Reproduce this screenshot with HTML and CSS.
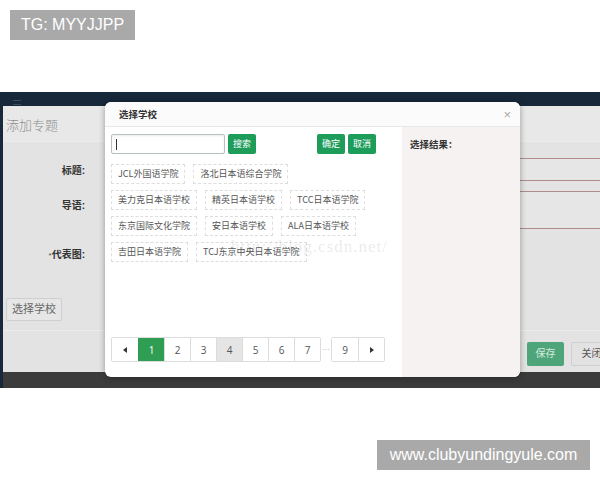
FILE: index.html
```html
<!DOCTYPE html>
<html lang="zh-CN">
<head>
<meta charset="utf-8">
<title>选择学校</title>
<link rel="stylesheet" href="styles.css">
</head>
<body>
<div class="top">
  <span class="badge">TG: MYYJJPP</span>
</div>
<div class="shot">
  <div class="app-header"><span class="menu-icon"></span></div>
  <div class="app-body">
    <div class="app-title">添加专题</div>
    <div class="form">
      <div class="row row-title">
        <label class="lbl">标题:</label>
        <div class="field field-input"></div>
      </div>
      <div class="row row-lead">
        <label class="lbl">导语:</label>
        <div class="field field-area"></div>
      </div>
      <div class="row row-pic">
        <label class="lbl"><span class="star">*</span>代表图:</label>
      </div>
      <div class="row-btn">
        <span class="btn-gray">选择学校</span>
      </div>
    </div>
    <div class="app-actions">
      <span class="btn-save">保存</span>
      <span class="btn-close">关闭</span>
    </div>
  </div>
  <div class="app-foot"></div>

  <div class="modal">
    <div class="modal-head">
      <span class="modal-title">选择学校</span>
      <span class="modal-x">×</span>
    </div>
    <div class="modal-body">
      <div class="pane-left">
        <div class="toolbar">
          <div class="search-input"><span class="caret"></span></div>
          <span class="btn-green">搜索</span>
          <span class="btn-green btn-ok">确定</span>
          <span class="btn-green">取消</span>
        </div>
        <div class="tags">
          <div class="tag-row">
            <span class="tag">JCL外国语学院</span>
            <span class="tag">洛北日本语综合学院</span>
          </div>
          <div class="tag-row">
            <span class="tag">美力克日本语学校</span>
            <span class="tag">精英日本语学校</span>
            <span class="tag">TCC日本语学院</span>
          </div>
          <div class="tag-row">
            <span class="tag">东京国际文化学院</span>
            <span class="tag">安日本语学校</span>
            <span class="tag">ALA日本语学校</span>
          </div>
          <div class="tag-row">
            <span class="tag">吉田日本语学院</span>
            <span class="tag">TCJ东京中央日本语学院</span>
          </div>
        </div>
        <div class="pager">
          <div class="pg-group">
            <span class="pg"><span class="tri tri-left"></span></span>
            <span class="pg pg-active">1</span>
            <span class="pg">2</span>
            <span class="pg">3</span>
            <span class="pg pg-hover">4</span>
            <span class="pg">5</span>
            <span class="pg">6</span>
            <span class="pg">7</span>
          </div>
          <span class="pg-dots">···</span>
          <div class="pg-group">
            <span class="pg">9</span>
            <span class="pg"><span class="tri tri-right"></span></span>
          </div>
        </div>
        <span class="csdn-mark">http://blog.csdn.net/</span>
      </div>
      <div class="pane-right">
        <div class="result-title">选择结果：</div>
      </div>
    </div>
  </div>
</div>
<div class="bottom">
  <span class="badge badge-url">www.clubyundingyule.com</span>
</div>
</body>
</html>
```

FILE: styles.css
```css
* { box-sizing: border-box; }

html, body {
  margin: 0;
  padding: 0;
  background: #ffffff;
}

body {
  width: 600px;
  height: 480px;
  overflow: hidden;
  font-family: "Liberation Sans", "Noto Sans CJK SC", sans-serif;
  color: #333;
}

.top {
  height: 92px;
  padding: 10px 0 0 10px;
}

.badge {
  display: inline-block;
  height: 30px;
  line-height: 30px;
  padding: 0 11px;
  background: #a9a9a9;
  color: #ffffff;
  font-size: 16px;
  font-family: "Liberation Sans", sans-serif;
}

.shot {
  position: relative;
  height: 296px;
  background: #3a3a3a;
  display: flex;
  flex-direction: column;
}

.app-header {
  height: 14px;
  background: #16283a;
  padding: 8px 0 0 13px;
}

.menu-icon {
  display: block;
  width: 8px;
  height: 5px;
  border-top: 1px solid #3d4d5c;
  border-bottom: 1px solid #3d4d5c;
}

.app-body {
  height: 266px;
  background: #e3e3e3;
  display: flex;
  flex-direction: column;
  border-left: 3px solid #16283a;
}

.app-title {
  height: 36px;
  padding: 9px 0 0 3px;
  font-size: 13px;
  color: #8f8f8f;
  background: #e8e8e8;
  border-bottom: 1px solid #ececec;
  font-family: "Noto Sans CJK SC", serif;
  font-weight: 300;
}

.form {
  display: flex;
  flex-direction: column;
}

.row {
  display: flex;
  align-items: flex-start;
}

.lbl {
  width: 82px;
  text-align: right;
  font-size: 10px;
  font-weight: bold;
  color: #333;
  flex: none;
}

.star { font-size: 8px; color: #555; font-weight: normal; }

.field {
  flex: 1;
  margin-left: 40px;
  border: 1px solid #b08c8c;
  border-right: none;
  background: #e6e6e6;
}

.row-title { margin-top: 16px; align-items: center; }
.field-input { height: 23px; }

.row-lead { margin-top: 10px; }
.row-lead .lbl { padding-top: 6px; }
.field-area { height: 38px; }

.row-pic { margin-top: 17px; }

.row-btn {
  margin-top: 37px;
  padding-left: 3px;
  padding-bottom: 9px;
  border-bottom: 1px solid #ececec;
}

.btn-gray {
  display: inline-block;
  width: 56px;
  height: 23px;
  line-height: 21px;
  text-align: center;
  font-size: 11px;
  color: #666;
  background: #e6e6e6;
  border: 1px solid #cfcfcf;
  border-radius: 2px;
}

.app-actions {
  display: flex;
  justify-content: flex-end;
  gap: 7px;
  padding-top: 11px;
  margin-right: -12px;
}

.btn-save, .btn-close {
  display: inline-block;
  height: 24px;
  line-height: 24px;
  text-align: center;
  font-size: 10px;
  border-radius: 2px;
}

.btn-save {
  width: 37px;
  background: #4ea579;
  color: #d7eadf;
}

.btn-close {
  width: 41px;
  background: #e2e2e2;
  color: #555;
  border: 1px solid #cfcfcf;
  line-height: 22px;
}

.app-foot {
  flex: 1;
  background: #3b3b3b;
  border-left: 3px solid #16283a;
}

/* modal */
.modal {
  position: absolute;
  left: 105px;
  top: 10px;
  width: 415px;
  height: 275px;
  background: #ffffff;
  border-radius: 6px;
  box-shadow: 0 1px 6px rgba(0, 0, 0, 0.35);
  display: flex;
  flex-direction: column;
  overflow: hidden;
}

.modal-head {
  height: 25px;
  display: flex;
  align-items: center;
  justify-content: space-between;
  padding: 0 9px 0 14px;
  border-bottom: 1px solid #e8e8e8;
  background: #fbfbfb;
}

.modal-title {
  font-size: 9.5px;
  font-weight: bold;
  color: #333;
  font-family: "Noto Sans CJK SC", sans-serif;
}

.modal-x {
  font-size: 13px;
  color: #aaa;
  font-weight: 300;
  line-height: 1;
}

.modal-body {
  flex: 1;
  display: flex;
}

.pane-left {
  position: relative;
  width: 297px;
  padding: 7px 0 15px 6px;
  display: flex;
  flex-direction: column;
}

.toolbar {
  display: flex;
  align-items: center;
  height: 20px;
}

.search-input {
  width: 114px;
  height: 20px;
  border: 1px solid #b7c2bd;
  border-radius: 2px;
  box-shadow: inset 0 1px 2px rgba(0, 0, 0, 0.08);
  padding: 4px 0 0 4px;
}

.caret {
  display: block;
  width: 1px;
  height: 11px;
  background: #333;
}

.btn-green {
  display: inline-block;
  width: 28px;
  height: 20px;
  line-height: 20px;
  margin-left: 3px;
  text-align: center;
  background: #1d9c5a;
  color: #ffffff;
  font-size: 9px;
  border-radius: 2px;
  font-family: "Noto Sans CJK SC", sans-serif;
}

.btn-ok { margin-left: 61px; }

.tags {
  margin-top: 10px;
  display: flex;
  flex-direction: column;
  gap: 6px;
}

.tag-row {
  display: flex;
  gap: 8px;
}

.tag {
  height: 20px;
  line-height: 18px;
  padding: 0 6px;
  border: 1px dashed #dddddd;
  font-size: 9px;
  color: #555;
  font-family: "Noto Sans CJK SC", sans-serif;
  white-space: nowrap;
}

.pager {
  margin-top: auto;
  display: flex;
  align-items: center;
}

.pg-group {
  display: flex;
  border: 1px solid #dcdcdc;
  border-radius: 2px;
}

.pg {
  width: 26px;
  height: 23px;
  display: flex;
  align-items: center;
  justify-content: center;
  font-size: 10px;
  color: #555;
  background: #ffffff;
  border-left: 1px solid #dcdcdc;
  font-family: "Open Sans", "Liberation Sans", sans-serif;
}

.pg:first-child { border-left: none; }

.pg-active {
  background: #2f9e52;
  color: #ffffff;
  border-left-color: #2f9e52;
}

.pg-hover { background: #e5e5e5; }

.pg-dots {
  width: 10px;
  text-align: center;
  font-size: 7px;
  color: #999;
}

.tri {
  width: 0;
  height: 0;
  border-top: 3px solid transparent;
  border-bottom: 3px solid transparent;
}

.tri-left { border-right: 4px solid #333; }
.tri-right { border-left: 4px solid #333; }

.csdn-mark {
  position: absolute;
  left: 126px;
  top: 110px;
  font-family: "Liberation Serif", serif;
  font-size: 17px;
  color: rgba(120, 120, 120, 0.16);
  letter-spacing: 1px;
  pointer-events: none;
}

.pane-right {
  flex: 1;
  background: #f5f2f1;
  padding: 10px 0 0 8px;
}

.result-title {
  font-size: 9.5px;
  font-weight: bold;
  color: #333;
  font-family: "Noto Sans CJK SC", sans-serif;
}

.bottom {
  height: 92px;
  padding: 52px 10px 0 0;
  text-align: right;
}

.badge-url {
  width: 213px;
  text-align: center;
  padding: 0;
}
```
